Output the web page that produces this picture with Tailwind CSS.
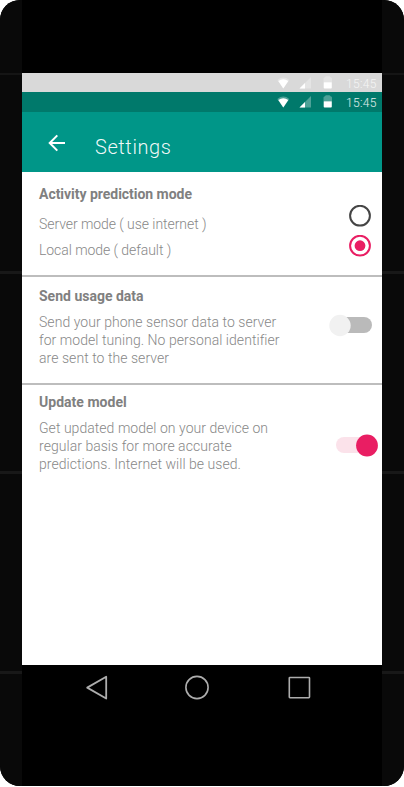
<!DOCTYPE html>
<html lang="en">
<head>
<meta charset="utf-8">
<title>Settings</title>
<script src="https://cdn.jsdelivr.net/npm/@tailwindcss/browser@4"></script>
</head>
<body class="bg-white font-['Roboto',sans-serif]">
<svg class="hidden">
  <symbol id="status" viewBox="0 0 56 20">
    <path d="M0.300 7Q6.300 2.200 12.300 7L6.300 15.400Z" fill="#fff" fill-opacity=".3"/>
    <path d="M1.300 8Q6.300 4.600 11.300 8L6.300 15.400Z" fill="#fff"/>
    <path d="M22.500 15.400L34 4V15.400Z" fill="#fff" fill-opacity=".3"/>
    <path d="M22.500 15.400L28 9.900V15.400Z" fill="#fff"/>
    <path d="M46.500 9V5.500Q46.500 4.400 48 4.200Q48.300 3.200 49.300 3.200H52.200Q53.200 3.200 53.500 4.200Q55 4.400 55 5.500V9Z" fill="#fff" fill-opacity=".3"/>
    <path d="M46.700 9.200H54.800V14.500Q54.800 15.400 54 15.400H47.500Q46.700 15.400 46.700 14.500Z" fill="#fff"/>
  </symbol>
</svg>
<div class="flex h-[786px] w-[404px] overflow-hidden rounded-[20px] bg-black">
  <div class="w-[22px] shrink-0 bg-[#090909] pt-[73px]">
    <div class="h-[2px] bg-[#151515]"></div>
    <div class="mt-[196px] h-[3px] bg-[#181818]"></div>
    <div class="mt-[197px] h-[3px] bg-[#181818]"></div>
    <div class="mt-[197px] h-[3px] bg-[#181818]"></div>
  </div>
  <main class="w-[360px] shrink-0 pt-[73px]">
    <div class="flex h-[19px] justify-end bg-[#d9d9d9] pr-[5px] text-white/75">
      <svg class="h-5 w-14"><use href="#status"/></svg>
      <span class="ml-[13px] w-[31px] whitespace-nowrap pt-px text-[12px] leading-5 font-light tracking-[0.3px]">15:45</span>
    </div>
    <div class="flex h-5 justify-end bg-[#00796b] pr-[5px] text-white/90">
      <svg class="h-5 w-14"><use href="#status"/></svg>
      <span class="ml-[13px] w-[31px] whitespace-nowrap pt-px text-[12px] leading-5 font-light tracking-[0.3px]">15:45</span>
    </div>
    <header class="flex h-[60px] items-start bg-[#009688] pl-[26px] text-white">
      <svg class="mt-[22px] h-[18px] w-[18px]" viewBox="0 0 18 18" fill="none" stroke="#fff" stroke-width="2"><path d="M17 9H2M9.300 1.400L1.700 9L9.300 16.600"/></svg>
      <h1 class="ml-[29px] pt-[20px] text-[20px] leading-[30px] font-light tracking-[0.58px] text-white/95">Settings</h1>
    </header>
    <div class="h-[493px] bg-white text-[14px] leading-[18px] font-light text-[#808080]">
      <section class="flex h-[105px] justify-between border-b-2 border-[#bdbdbd] pt-[13px] pr-[11px] pl-[17px]">
        <div class="whitespace-nowrap">
          <h2 class="font-bold tracking-[-0.03px]">Activity prediction mode</h2>
          <p class="mt-3 tracking-[-0.06px] text-[#888]">Server mode ( use internet )</p>
          <p class="mt-2 tracking-[-0.06px] text-[#888]">Local mode ( default )</p>
        </div>
        <div class="flex flex-col gap-2 pt-[20px]">
          <svg class="h-[22px] w-[22px]" viewBox="0 0 22 22"><circle cx="11" cy="10.700" r="9.900" fill="none" stroke="#454545" stroke-width="2"/></svg>
          <svg class="h-[22px] w-[22px]" viewBox="0 0 22 22"><circle cx="11" cy="10.700" r="9.900" fill="none" stroke="#e91e63" stroke-width="2"/><circle cx="11" cy="10.700" r="5.400" fill="#e91e63"/></svg>
        </div>
      </section>
      <section class="flex h-[108px] justify-between border-b-2 border-[#bdbdbd] pt-[10px] pr-[9px] pl-[17px]">
        <div class="whitespace-nowrap">
          <h2 class="font-bold">Send usage data</h2>
          <p class="mt-2 tracking-[0.05px] text-[#888]">Send your phone sensor data to server<br>for model tuning. No personal identifier<br>are sent to the server</p>
        </div>
        <svg class="mt-[27px] h-[24px] w-[44px]" viewBox="0 0 44 24"><rect x="10" y="3" width="33" height="16" rx="8" fill="#bababa"/><circle cx="11" cy="11.500" r="10.700" fill="#f1f1f1"/></svg>
      </section>
      <section class="flex justify-between pt-2 pr-[3px] pl-[17px]">
        <div class="whitespace-nowrap">
          <h2 class="font-bold tracking-[0.03px]">Update model</h2>
          <p class="mt-2 tracking-[0.04px] text-[#888]">Get updated model on your device on<br>regular basis for more accurate<br>predictions. Internet will be used.</p>
        </div>
        <svg class="mt-[41px] h-[24px] w-[44px]" viewBox="0 0 44 24"><rect x="1" y="3" width="36" height="16" rx="8" fill="#fbe2ea"/><circle cx="32" cy="11.500" r="10.900" fill="#e91e63"/></svg>
      </section>
    </div>
    <nav class="flex justify-between pt-[10px] pr-[70px] pl-[62px]">
      <svg class="h-[26px] w-[26px]" viewBox="0 0 26 26" fill="none" stroke="#adadad" stroke-width="1.800" stroke-linejoin="round"><path d="M3.200 12.600L22.200 1.700V23.500Z"/></svg>
      <svg class="h-[26px] w-[26px]" viewBox="0 0 26 26" fill="none" stroke="#adadad" stroke-width="1.600"><circle cx="12" cy="12.500" r="11.100"/></svg>
      <svg class="h-[26px] w-[26px]" viewBox="0 0 26 26" fill="none" stroke="#adadad" stroke-width="1.600"><rect x="3.300" y="2.500" width="20.200" height="20.200" rx=".6"/></svg>
    </nav>
  </main>
  <div class="w-[22px] shrink-0 bg-[#090909] pt-[73px]">
    <div class="h-[2px] bg-[#151515]"></div>
    <div class="mt-[196px] h-[3px] bg-[#181818]"></div>
    <div class="mt-[197px] h-[3px] bg-[#181818]"></div>
    <div class="mt-[197px] h-[3px] bg-[#181818]"></div>
  </div>
</div>
</body>
</html>
